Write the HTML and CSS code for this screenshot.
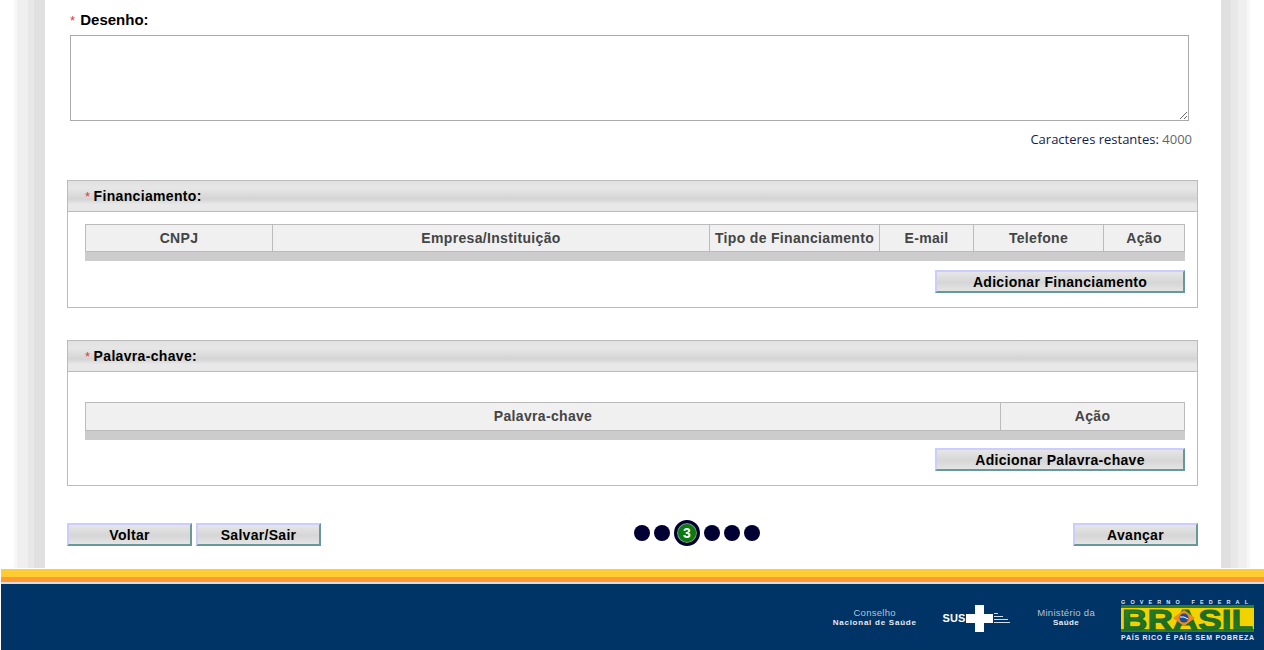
FILE: index.html
```html
<!DOCTYPE html>
<html>
    <head>
        <meta charset="utf-8">
        <title>Plataforma Brasil</title>
        <link rel="stylesheet" href="styles.css">
    </head>
    <body>
        <div class="shell">
            <div class="content">
                <label class="field-label" for="desenho"><span class="req">*</span> Desenho:</label>
                <textarea class="field-text" id="desenho"></textarea>
                <p class="counter">Caracteres restantes: <span class="counter-num">4000</span></p>

                <div class="section section-fin">
                    <div class="section-head"><span class="req">*</span> Financiamento:</div>
                    <div class="section-body">
                        <table class="grid">
                            <tr>
                                <th class="c-cnpj">CNPJ</th>
                                <th>Empresa/Instituição</th>
                                <th class="c-tipo">Tipo de Financiamento</th>
                                <th class="c-mail">E-mail</th>
                                <th class="c-fone">Telefone</th>
                                <th class="c-acao">Ação</th>
                            </tr>
                        </table>
                        <div class="grid-foot"></div>
                        <div class="add-row"><button class="btn btn-add">Adicionar Financiamento</button></div>
                    </div>
                </div>

                <div class="section section-key">
                    <div class="section-head"><span class="req">*</span> Palavra-chave:</div>
                    <div class="section-body body-key">
                        <table class="grid">
                            <tr>
                                <th>Palavra-chave</th>
                                <th class="c-acao2">Ação</th>
                            </tr>
                        </table>
                        <div class="grid-foot"></div>
                        <div class="add-row"><button class="btn btn-add">Adicionar Palavra-chave</button></div>
                    </div>
                </div>

                <div class="nav-row">
                    <div class="nav-left">
                        <button class="btn btn-nav">Voltar</button>
                        <button class="btn btn-nav">Salvar/Sair</button>
                    </div>
                    <div class="dots">
                        <span class="dot"></span>
                        <span class="dot"></span>
                        <span class="dot dot-on">3</span>
                        <span class="dot"></span>
                        <span class="dot"></span>
                        <span class="dot"></span>
                    </div>
                    <button class="btn btn-nav">Avançar</button>
                </div>
            </div>
        </div>

        <div class="footer">
            <div class="logo logo-cns">
                <span class="logo-thin">Conselho</span>
                <span class="logo-bold logo-wide">Nacional de Saúde</span>
            </div>
            <div class="logo-sus">
                <span class="sus-name">SUS</span>
                <svg class="sus-cross" width="27" height="27" viewBox="0 0 27 27">
                    <path d="M9 0h9v9h9v9h-9v9H9v-9H0V9h9z" fill="#fff"/>
                </svg>
                <svg class="sus-lines" width="16" height="12" viewBox="0 0 16 12">
                    <path d="M0 1.5h4M0 4.5h9M0 7.5h14M0 10.5h16" stroke="#d4dce6" stroke-width="1.2"/>
                </svg>
            </div>
            <div class="logo logo-ms">
                <span class="logo-thin">Ministério da</span>
                <span class="logo-bold">Saúde</span>
            </div>
            <div class="logo-br">
                <div class="br-top">GOVERNO FEDERAL</div>
                <svg class="br-mark" width="133" height="27" viewBox="0 0 133 27">
                    <defs>
                        <linearGradient id="br-fill" x1="0" y1="0" x2="1" y2="1">
                            <stop offset="0" stop-color="#2f8a2a"/>
                            <stop offset=".5" stop-color="#1d6b22"/>
                            <stop offset="1" stop-color="#2a7f28"/>
                        </linearGradient>
                    </defs>
                    <rect width="133" height="27" fill="#f2d200"/>
                    <path d="M0 0h133v3H0zM0 24h133v3H0z" fill="#2a7f28"/>
                    <text x="1" y="25" class="br-word" textLength="131" lengthAdjust="spacingAndGlyphs">BRASIL</text>
                    <path d="M52 13l11-8 11 8-11 8z" fill="#f08a1c"/>
                    <circle cx="63" cy="13" r="4.5" fill="#1c4a94"/>
                    <path d="M59 12q4-1 8 2" stroke="#fff" fill="none"/>
                </svg>
                <div class="br-bottom">PAÍS RICO É PAÍS SEM POBREZA</div>
            </div>
        </div>
    </body>
</html>
```

FILE: styles.css
```css
html, body {
    margin: 0;
    padding: 0;
    height: 650px;
    overflow: hidden;
    background: #fff;
    font-family: "Liberation Sans", Arial, sans-serif;
}
.shell {
    height: 568px;
    margin-bottom: 1px;
    padding: 0 43px 0 45px;
    background:
        linear-gradient(90deg, #fff 14px, #f7f7f7 14px, #f7f7f7 17px, #efefef 17px, #efefef 28px, #e8e8e8 28px, #e8e8e8 34px, #e0e0e0 34px, #e0e0e0 45px, #fff 45px) left top / 50% 100% no-repeat,
        linear-gradient(270deg, #fff 14px, #f7f7f7 14px, #f7f7f7 17px, #efefef 17px, #efefef 26px, #e8e8e8 26px, #e8e8e8 33px, #e0e0e0 33px, #e0e0e0 43px, #fff 43px) right top / 50% 100% no-repeat;
}
.content {
    background: #fff;
    height: 568px;
    padding: 11px 23px 0 22px;
    box-sizing: border-box;
}
.req {
    color: #e33;
    font-weight: normal;
    font-size: 13px;
}
.field-label {
    display: block;
    margin-left: 3px;
    height: 18px;
    font-size: 15px;
    line-height: 17px;
    font-weight: bold;
    color: #000;
}
.field-label .req {
    margin-right: 1px;
}
.field-text {
    display: block;
    box-sizing: border-box;
    width: 1119px;
    height: 86px;
    margin: 6px 0 0 3px;
    border: 1px solid #aaa;
    padding: 2px;
    background: #fff;
}
.counter {
    margin: 9px 6px 0 0;
    height: 18px;
    text-align: right;
    font-family: "Open Sans", sans-serif;
    font-size: 13px;
    line-height: 18px;
    color: #14224a;
}
.counter-num {
    color: #666;
}
.section {
    border: 1px solid #bbb;
    box-sizing: border-box;
}
.section-fin {
    margin-top: 32px;
    height: 128px;
}
.section-key {
    margin-top: 32px;
    height: 146px;
}
.section-head {
    height: 31px;
    box-sizing: border-box;
    border-bottom: 1px solid #bbb;
    padding-left: 17px;
    font-size: 14px;
    line-height: 30px;
    font-weight: bold;
    letter-spacing: 0.33px;
    color: #000;
    background: linear-gradient(#e2e2e2, #e6e6e6 25%, #d4d4d4 60%, #e8e8e8 78%, #e8e8e8);
}
.section-head .req {
    margin-right: -1px;
}
.section-body {
    padding: 12px 12px 0 17px;
}
.body-key {
    padding-top: 30px;
}
.grid {
    width: 100%;
    border-collapse: collapse;
    table-layout: fixed;
}
.grid th {
    height: 26px;
    padding: 0;
    border: 1px solid #bbb;
    background: #f0f0f0;
    font-size: 14px;
    font-weight: bold;
    letter-spacing: 0.33px;
    color: #444;
}
.body-key .grid th {
    padding-bottom: 1px;
}
.c-cnpj { width: 186px; }
.c-tipo { width: 169px; }
.c-mail { width: 93px; }
.c-fone { width: 129px; }
.c-acao { width: 80px; }
.c-acao2 { width: 183px; }
.grid-foot {
    height: 9px;
    background: #ccc;
}
.add-row {
    display: flex;
    justify-content: flex-end;
    margin-top: 9px;
}
.body-key .add-row {
    margin-top: 8px;
}
.btn {
    box-sizing: border-box;
    height: 23px;
    padding: 0;
    border-style: solid;
    border-width: 2px;
    border-color: #ccccff #669999 #669999 #ccccff;
    background: linear-gradient(#e6e6e6, #d6d6d6 55%, #e4e4e4);
    font-family: "Liberation Sans", Arial, sans-serif;
    font-size: 14px;
    font-weight: bold;
    letter-spacing: 0.3px;
    color: #000;
}
.btn-add {
    width: 250px;
}
.btn-nav {
    width: 125px;
}
.nav-row {
    display: flex;
    justify-content: space-between;
    align-items: flex-start;
    margin-top: 37px;
}
.nav-left {
    display: flex;
    gap: 4px;
}
.dots {
    display: flex;
    align-items: center;
    gap: 4px;
    height: 28px;
    margin-top: -4px;
}
.dot {
    width: 16px;
    height: 16px;
    border-radius: 50%;
    background: #000033;
}
.dot-on {
    box-sizing: border-box;
    width: 26px;
    height: 26px;
    border: 3px solid #000033;
    box-shadow: inset 0 0 0 1px #8a9a8a;
    background: #0a7a12;
    color: #fff;
    font-size: 14px;
    font-weight: bold;
    line-height: 20px;
    text-align: center;
}
.footer {
    box-sizing: border-box;
    height: 81px;
    margin-left: 1px;
    border-top: 8px solid #ffcc33;
    padding-right: 10px;
    display: flex;
    align-items: center;
    justify-content: flex-end;
    background: linear-gradient(#ff9933 5px, #dcdcdc 5px, #dcdcdc 7px, #003366 7px);
    background-origin: padding-box;
    color: #fff;
}
.logo {
    display: flex;
    flex-direction: column;
    align-items: center;
    font-size: 8px;
    line-height: 10px;
    margin-top: 9px;
}
.logo-thin {
    color: #b4c4d6;
    font-size: 9.5px;
    font-weight: normal;
    letter-spacing: 0.3px;
}
.logo-bold {
    color: #e6ebf2;
    font-weight: bold;
    letter-spacing: 0.4px;
}
.logo-wide {
    letter-spacing: 0.75px;
}
.logo-cns {
    margin-right: 26px;
}
.logo-sus {
    display: flex;
    align-items: center;
    gap: 1px;
    margin-top: 9px;
    margin-right: 27px;
}
.sus-name {
    font-size: 11px;
    font-weight: bold;
    color: #fff;
}
.logo-ms {
    margin-right: 26px;
}
.logo-br {
    width: 133px;
    margin-top: 13px;
}
.br-top {
    font-size: 5.5px;
    line-height: 6px;
    font-weight: bold;
    letter-spacing: 5.1px;
    color: #dfe6ee;
    white-space: nowrap;
    overflow: hidden;
}
.br-mark {
    display: block;
    overflow: visible;
}
.br-word {
    font-family: "Liberation Sans", Arial, sans-serif;
    font-size: 30px;
    font-weight: bold;
    fill: url(#br-fill);
    stroke: #1d6b22;
    stroke-width: 1;
}
.br-bottom {
    margin-top: 1px;
    font-size: 7px;
    line-height: 9px;
    font-weight: bold;
    letter-spacing: 0.75px;
    color: #e6ebf2;
    white-space: nowrap;
}
```
